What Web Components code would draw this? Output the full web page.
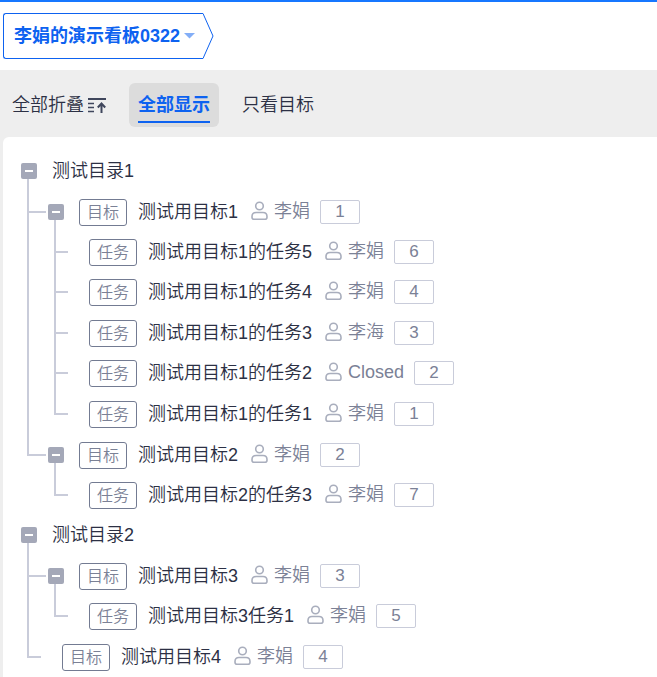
<!DOCTYPE html>
<html lang="zh-CN">
<head>
<meta charset="UTF-8">
<meta name="viewport" content="width=device-width, initial-scale=1.0">
<title>李娟的演示看板0322</title>
<style>
    body {
        --accent: #0d62f0;
        --surface: #eeeeee;
        --text-primary: #2c3044;
        --text-muted: #7b8196;
        --line: #c9ccda;
        --toggle: #a4a8b8;
        margin: 0;
        background: var(--surface);
        color: var(--text-primary);
        font: 18px/24px "Liberation Sans", "Noto Sans CJK SC", sans-serif;
    }
</style>
</head>
<body>
<board-page>
    <board-crumb slot="header">李娟的演示看板0322</board-crumb>

    <view-tab slot="toolbar" action="collapse" icon>全部折叠</view-tab>
    <view-tab slot="toolbar" action="all" active>全部显示</view-tab>
    <view-tab slot="toolbar" action="goals">只看目标</view-tab>

    <tree-node kind="folder" name="测试目录1">
        <tree-node kind="goal" name="测试用目标1" owner="李娟" count="1">
            <tree-node kind="task" name="测试用目标1的任务5" owner="李娟" count="6"></tree-node>
            <tree-node kind="task" name="测试用目标1的任务4" owner="李娟" count="4"></tree-node>
            <tree-node kind="task" name="测试用目标1的任务3" owner="李海" count="3"></tree-node>
            <tree-node kind="task" name="测试用目标1的任务2" owner="Closed" count="2"></tree-node>
            <tree-node kind="task" name="测试用目标1的任务1" owner="李娟" count="1"></tree-node>
        </tree-node>
        <tree-node kind="goal" name="测试用目标2" owner="李娟" count="2">
            <tree-node kind="task" name="测试用目标2的任务3" owner="李娟" count="7"></tree-node>
        </tree-node>
    </tree-node>
    <tree-node kind="folder" name="测试目录2">
        <tree-node kind="goal" name="测试用目标3" owner="李娟" count="3">
            <tree-node kind="task" name="测试用目标3任务1" owner="李娟" count="5"></tree-node>
        </tree-node>
        <tree-node kind="goal" name="测试用目标4" owner="李娟" count="4"></tree-node>
    </tree-node>
</board-page>

<script>
class BoardPage extends HTMLElement {
    constructor() {
        super();
        this.attachShadow({ mode: 'open' });
        this.shadowRoot.innerHTML = `
            <style>
                :host {
                    display: flex;
                    flex-direction: column;
                    min-height: 100vh;
                }

                header {
                    display: flex;
                    padding: 11px 3px;
                    background: #fff;
                    border-top: 2px solid #1677ff;
                }

                nav {
                    display: flex;
                    gap: 14px;
                    padding: 13px 3px 10px;
                }

                main {
                    flex: 1;
                    margin-left: 3px;
                    padding: 14px 0 0 18px;
                    background: #fff;
                    border-top-left-radius: 6px;
                }
            </style>
            <header><slot name="header"></slot></header>
            <nav><slot name="toolbar"></slot></nav>
            <main role="tree"><slot></slot></main>
        `;
    }

    connectedCallback() {
        this.addEventListener('tab-select', (e) => this.applyView(e.detail));
    }

    applyView(action) {
        this.querySelectorAll('view-tab').forEach((tab) => {
            tab.toggleAttribute('active', tab.getAttribute('action') === action);
        });
        this.querySelectorAll('tree-node').forEach((node) => {
            node.hidden = action === 'goals' && node.getAttribute('kind') === 'task';
            node.setCollapsed(action === 'collapse');
        });
    }
}

class BoardCrumb extends HTMLElement {
    constructor() {
        super();
        this.attachShadow({ mode: 'open' });
        this.shadowRoot.innerHTML = `
            <style>
                :host {
                    display: block;
                }

                button {
                    display: flex;
                    height: 46px;
                    padding: 0;
                    border: none;
                    background: none;
                    color: var(--accent);
                    font: inherit;
                    font-weight: 700;
                    cursor: pointer;
                }

                .body {
                    display: flex;
                    align-items: center;
                    gap: 4px;
                    box-sizing: border-box;
                    height: 46px;
                    padding: 0 8px 0 10px;
                    border: 1px solid var(--accent);
                    border-right: none;
                    border-radius: 3px 0 0 3px;
                }
            </style>
            <button type="button" aria-haspopup="menu">
                <span class="body">
                    <slot></slot>
                    <svg width="11" height="6" viewBox="0 0 11 6"><path d="M0 0h11L5.500 5.500z" fill="#83aef7"/></svg>
                </span>
                <svg width="11" height="46" viewBox="0 0 11 46"><path d="M0 .5L10 23L0 45.500" fill="none" stroke="#0d62f0"/></svg>
            </button>
        `;
    }
}

class ViewTab extends HTMLElement {
    constructor() {
        super();
        this.attachShadow({ mode: 'open' });
        this.shadowRoot.innerHTML = `
            <style>
                :host {
                    display: block;
                }

                button {
                    display: flex;
                    align-items: center;
                    gap: 4px;
                    height: 44px;
                    padding: 0 9px;
                    border: none;
                    border-radius: 6px;
                    background: none;
                    color: var(--text-primary);
                    font: inherit;
                    font-weight: 350;
                    cursor: pointer;
                }

                .text {
                    padding: 6px 0 4px;
                    border-bottom: 2px solid transparent;
                    line-height: 24px;
                }

                svg {
                    display: none;
                }

                :host([icon]) svg {
                    display: block;
                }

                :host([active]) button {
                    background: #dcdcdc;
                    color: var(--accent);
                    font-weight: 700;
                }

                :host([active]) .text {
                    border-color: var(--accent);
                }
            </style>
            <button type="button">
                <span class="text"><slot></slot></span>
                <svg width="18" height="16" viewBox="0 0 18 16" fill="none" stroke="#3f465c" stroke-width="2">
                    <path d="M0 2h18"/>
                    <path d="M0 6.500h6M0 10.500h6M0 14.500h6" stroke-width="1.500"/>
                    <path d="M13.500 16V6.500M9.800 10.500l3.700-4l3.700 4"/>
                </svg>
            </button>
        `;
    }

    connectedCallback() {
        this.shadowRoot.querySelector('button').addEventListener('click', () => {
            this.dispatchEvent(new CustomEvent('tab-select', {
                bubbles: true,
                detail: this.getAttribute('action')
            }));
        });
    }
}

class OwnerTag extends HTMLElement {
    constructor() {
        super();
        this.attachShadow({ mode: 'open' });
        this.shadowRoot.innerHTML = `
            <style>
                :host {
                    display: flex;
                    align-items: center;
                    gap: 6px;
                    padding-bottom: 2px;
                    color: var(--text-muted);
                }
            </style>
            <svg width="17" height="20" viewBox="0 0 17 20" fill="none" stroke="#a9aebd" stroke-width="1.600">
                <circle cx="8.500" cy="5" r="3.800"/>
                <path d="M3 18.200h11q2 0 2-2v-.700q0-4-4-4H5q-4 0-4 4v.700q0 2 2 2z"/>
            </svg>
            <slot></slot>
        `;
    }
}

class TreeNode extends HTMLElement {
    constructor() {
        super();
        this.attachShadow({ mode: 'open' });
    }

    connectedCallback() {
        this.setAttribute('role', 'treeitem');
        this.render();
    }

    render() {
        const kind = this.getAttribute('kind');
        const name = this.getAttribute('name');
        const isBranch = this.children.length > 0;
        this.toggleAttribute('branch', isBranch);

        const toggle = isBranch
            ? `<button type="button" aria-label="${name}" aria-expanded="true"></button>`
            : '';
        const type = kind === 'folder' ? '' : `<span class="type">${kind === 'goal' ? '目标' : '任务'}</span>`;
        const meta = kind === 'folder' ? '' : `
            <owner-tag>${this.getAttribute('owner')}</owner-tag>
            <span class="count">${this.getAttribute('count')}</span>`;

        this.shadowRoot.innerHTML = `
            <style>
                :host {
                    --arm: 14px;
                    --arm-y: 19px;
                    display: block;
                    font-weight: 350;
                }

                :host([hidden]) {
                    display: none;
                }

                /* connector: a vertical rail and a short arm into the row */
                :host(:not([kind="folder"])) {
                    background:
                        linear-gradient(var(--line), var(--line)) 0 0 / 2px var(--rail, 100%) no-repeat,
                        linear-gradient(var(--line), var(--line)) 0 var(--arm-y) / var(--arm) 2px no-repeat;
                }

                :host([kind="goal"]) {
                    --arm-y: 20px;
                }

                :host([kind="goal"][branch]) {
                    --arm: 19px;
                }

                :host(:last-child) {
                    --rail: calc(var(--arm-y) + 2px);
                }

                :host(:not(:last-child)) {
                    --rail: 100%;
                }

                .row {
                    display: flex;
                    align-items: center;
                    height: 40px;
                    padding-left: 35px;
                    white-space: nowrap;
                }

                :host([kind="goal"]) .row {
                    padding-top: 1px;
                }

                :host([kind="task"]:nth-child(even)) .row {
                    padding-bottom: 1px;
                }

                :host([branch]) .row {
                    padding-left: 21px;
                    background: linear-gradient(var(--line), var(--line)) 27px 24px / 2px 100% no-repeat;
                }

                :host([kind="folder"]) .row {
                    padding-left: 0;
                    background-position: 6px 24px;
                }

                button {
                    display: flex;
                    align-items: center;
                    justify-content: center;
                    width: 16px;
                    height: 16px;
                    margin: 0 15px 0 0;
                    padding: 0;
                    border: none;
                    border-radius: 2px;
                    background: var(--toggle);
                    cursor: pointer;
                }

                button::before {
                    content: "";
                    width: 8px;
                    height: 2px;
                    background: #fff;
                }

                .type {
                    box-sizing: border-box;
                    height: 27px;
                    margin-right: 11px;
                    padding: 0 7px;
                    border: 1px solid #737b92;
                    border-radius: 3px;
                    color: var(--text-muted);
                    font-size: 16px;
                    line-height: 25px;
                }

                owner-tag {
                    margin: 0 10px 0 13px;
                }

                .count {
                    box-sizing: border-box;
                    min-width: 40px;
                    height: 24px;
                    border: 1px solid var(--line);
                    border-radius: 2px;
                    color: var(--text-muted);
                    font-size: 17px;
                    line-height: 22px;
                    text-align: center;
                }

                .children {
                    margin-left: 27px;
                }

                :host([kind="folder"]) .children {
                    margin-left: 6px;
                }

                :host([collapsed]) .children {
                    display: none;
                }

                :host([collapsed]) .row {
                    background: none;
                }
            </style>
            <div class="row">${toggle}${type}<span class="name">${name}</span>${meta}</div>
            <div class="children" role="group"><slot></slot></div>
        `;

        if (isBranch) {
            this.shadowRoot.querySelector('button').addEventListener('click', () => {
                this.setCollapsed(!this.hasAttribute('collapsed'));
            });
        }
    }

    setCollapsed(collapsed) {
        const button = this.shadowRoot.querySelector('button');
        if (!button) return;

        this.toggleAttribute('collapsed', collapsed);
        button.setAttribute('aria-expanded', String(!collapsed));
    }
}

// Register the components
customElements.define('board-page', BoardPage);
customElements.define('board-crumb', BoardCrumb);
customElements.define('view-tab', ViewTab);
customElements.define('owner-tag', OwnerTag);
customElements.define('tree-node', TreeNode);
</script>
</body>
</html>
